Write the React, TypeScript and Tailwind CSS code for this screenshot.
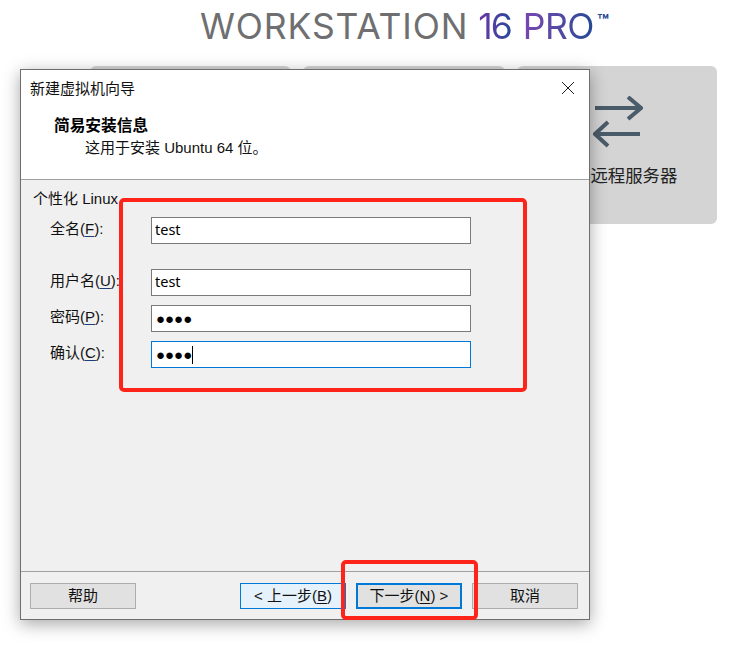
function Field({ label, k, value, focused, dots, className = "" }: { label: string; k: string; value: string; focused?: boolean; dots?: boolean; className?: string }) {
  return (
    <div className={"flex items-center h-[27px] " + className}>
      <div className="w-[130px] pl-[29px] pb-[3px] shrink-0 whitespace-nowrap text-[15px] text-[#111]">
        {label}(<span className="underline underline-offset-2 decoration-[#1a3f7a]">{k}</span>):
      </div>
      <div className={"w-[320px] h-[27px] bg-white border flex items-center pl-[3px] text-black " + (focused ? "border-[#0078d7]" : "border-[#7a7a7a]")}>
        <span className={dots ? "text-[15px] leading-none pl-[1px]" : "text-[14.5px] pb-[2px] font-['Noto_Sans',sans-serif]"}>{value}</span>
        {focused && <span className="w-px h-[18px] bg-black" />}
      </div>
    </div>
  );
}

function Btn({ children, kind = "plain", className = "" }: { children: React.ReactNode; kind?: "plain" | "blue" | "primary"; className?: string }) {
  const styles = {
    plain: "border-[#adadad] bg-[#e1e1e1]",
    blue: "border-[#0078d7] bg-[#e5f1fb]",
    primary: "border-2 border-[#0078d7] bg-[#e1e1e1]",
  }[kind];
  return (
    <div className={"w-[106px] h-[26px] border flex items-center justify-center text-[15px] text-[#111] whitespace-pre " + styles + " " + className}>
      {children}
    </div>
  );
}

export default function App() {
  return (
    <div className="relative w-[747px] h-[649px] overflow-hidden bg-white font-['Liberation_Sans','Noto_Sans_CJK_SC',sans-serif]">
      <div className="pl-[200px] pt-[6px] h-[66px] whitespace-nowrap text-[35.5px] leading-[42px] font-normal font-['Inter','Noto_Sans',sans-serif] text-[#6f6f71]">
        <span className="tracking-[0.85px]">WORKSTATION</span>
        <span className="ml-[10px] tracking-[-2px] bg-gradient-to-r from-[#6a35a8] to-[#24479a] bg-clip-text text-transparent">16</span>
        <span className="ml-[12px] tracking-[-0.5px] bg-gradient-to-r from-[#7a45b0] to-[#1f4a96] bg-clip-text text-transparent">PRO</span>
        <span className="ml-[3px] text-[#1f4a96] text-[19px] leading-none align-[11px] font-bold">™</span>
      </div>

      <div className="flex gap-[12px] pl-[90px]">
        <div className="w-[201px] h-[158px] rounded-[6px] bg-[#d4d4d4]" />
        <div className="w-[202px] h-[158px] rounded-[6px] bg-[#d4d4d4]" />
        <div className="w-[200px] h-[158px] rounded-[6px] bg-[#d4d4d4] flex flex-col items-center pt-[30px]">
          <svg width="50" height="52" viewBox="0 0 50 52" fill="none" stroke="#4a5b69" strokeWidth="4" className="ml-[2px]">
            <path d="M2 12H48M35 1L48 12L35 23" />
            <path d="M47 38H3M15 26L2 38L15 50" />
          </svg>
          <div className="mt-[16px] ml-[-1px] text-[17.4px] leading-[24px] text-[#222] whitespace-nowrap">连接远程服务器</div>
        </div>
      </div>

      <div className="absolute left-[20px] top-[69px] w-[570px] h-[551px] border border-[#6e6e6e] bg-[#f0f0f0] flex flex-col shadow-[0_4px_16px_rgba(0,0,0,0.35)]">
        <div className="h-[110px] shrink-0 bg-white border-b border-[#a0a0a0] relative text-[15px] text-[#111]">
          <div className="pl-[9px] pt-[8px] leading-[22px]">新建虚拟机向导</div>
          <svg width="14" height="14" viewBox="0 0 14 14" className="absolute left-[540px] top-[11px]" stroke="#222" strokeWidth="1" fill="none">
            <path d="M1 1L13 13M13 1L1 13" />
          </svg>
          <div className="pl-[33px] pt-[15px] leading-[22px] text-[15.7px] font-bold text-black">简易安装信息</div>
          <div className="pl-[64px] leading-[22px] whitespace-pre">这用于安装 Ubuntu 64 位。</div>
        </div>

        <div className="flex-1 pt-[9px]">
          <div className="pl-[12px] text-[15px] leading-[20px] text-[#111]">个性化 Linux</div>
          <div className="flex flex-col mt-[8px]">
            <Field label="全名" k="F" value="test" />
            <Field label="用户名" k="U" value="test" className="mt-[25px]" />
            <Field label="密码" k="P" value="●●●●" dots className="mt-[9px]" />
            <Field label="确认" k="C" value="●●●●" dots focused className="mt-[9px]" />
          </div>
        </div>

        <div className="h-[48px] shrink-0 border-t border-[#a0a0a0] flex pl-[9px] pt-[11px]">
          <Btn>帮助</Btn>
          <Btn kind="blue" className="ml-[104px]">&lt; 上一步(<span className="underline underline-offset-2">B</span>)</Btn>
          <Btn kind="primary" className="ml-[10px]">下一步(<span className="underline underline-offset-2">N</span>) &gt;</Btn>
          <Btn className="ml-[10px]">取消</Btn>
        </div>
      </div>

      <div className="absolute left-[119px] top-[198px] w-[408px] h-[194px] border-[4px] border-[#ff2419] rounded-[5px]" />
      <div className="absolute left-[341px] top-[560px] w-[137px] h-[60px] border-[4px] border-[#ff2419] rounded-[5px]" />
    </div>
  );
}
